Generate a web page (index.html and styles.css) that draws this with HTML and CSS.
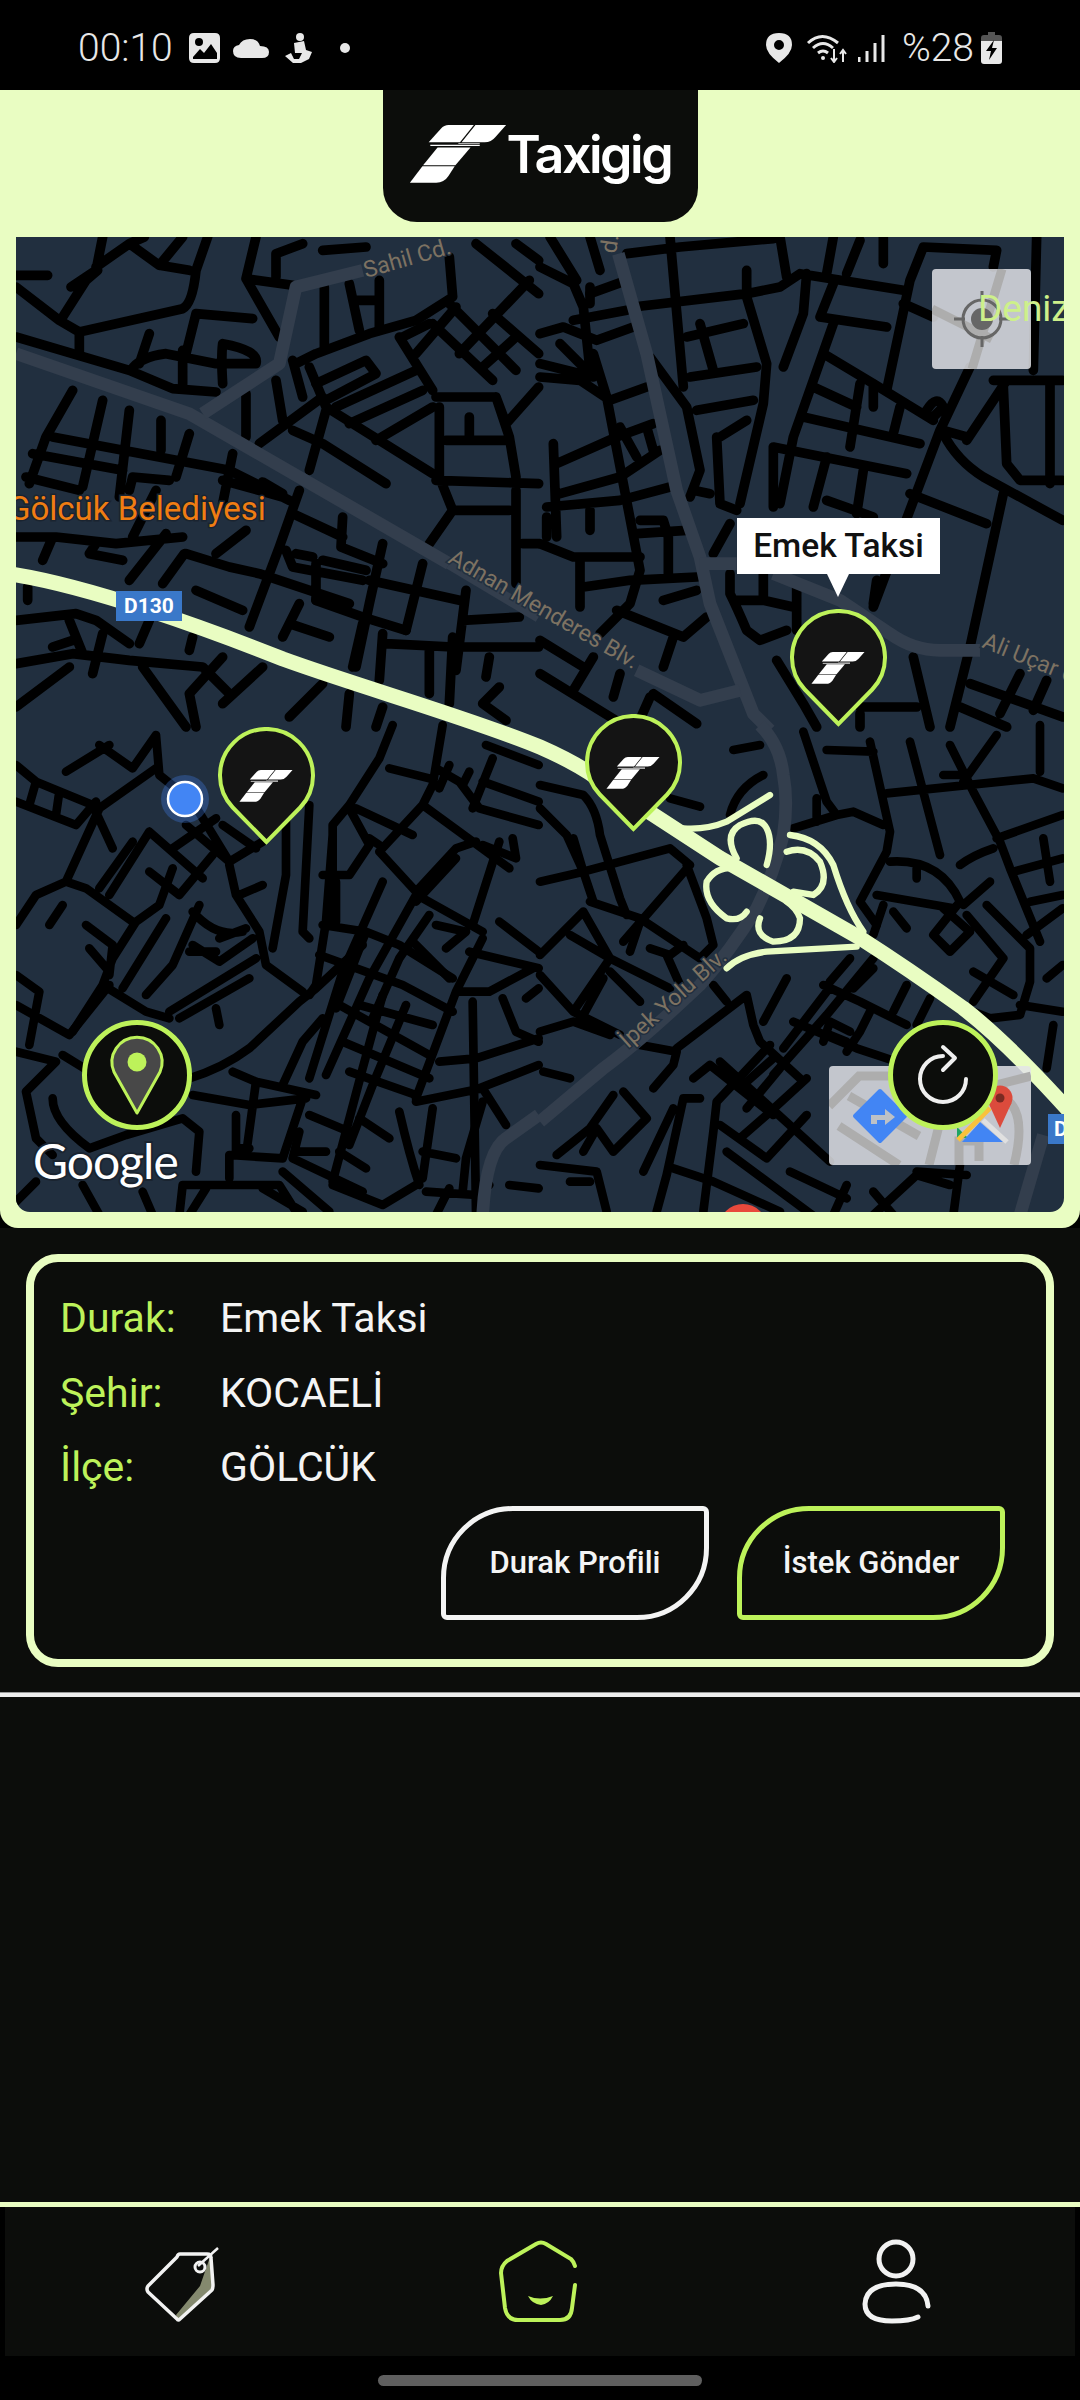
FILE: index.html
```html
<!DOCTYPE html>
<html lang="tr">
<head>
  <meta charset="UTF-8" />
  <meta name="viewport" content="width=device-width, initial-scale=1" />
  <title>Taxigig</title>
  <link rel="stylesheet" href="styles.css">
</head>
<body>
  <svg class="defs" aria-hidden="true">
    <symbol id="tlogo" viewBox="178 135 292 176">
      <path d="M235 187L272 146Q282 135 295 135H372L330 187Z"/>
      <path d="M335 187L377 135H470L437 172Q425 187 405 187Z"/>
      <path d="M240 195H390V199H240Z"/>
      <path d="M325 190H390V192H325Z"/>
      <path d="M262 203H362L316 257H218Z"/>
      <path d="M216 260H314L295 290Q282 310 258 310H178Z"/>
    </symbol>
  </svg>

  <div class="status">
    <div class="status-left">
      <span class="clock">00:10</span>
      <svg class="st-gallery" viewBox="0 0 31 30"><path d="M5 0H26Q31 0 31 5V25Q31 30 26 30H5Q0 30 0 25V5Q0 0 5 0Z" fill="#e8e8e8"/><circle cx="10" cy="9" r="4" fill="#000"/><path d="M4 24L11 16L15 20L22 11L28 20V26H4Z" fill="#000"/></svg>
      <svg class="st-cloud" viewBox="0 0 36 19"><path d="M8 19Q0 19 0 12Q0 7 6 6Q9 0 17 0Q25 0 27 7Q36 7 36 13Q36 19 29 19Z" fill="#e8e8e8"/></svg>
      <svg class="st-figure" viewBox="0 0 28 30"><circle cx="15" cy="4" r="4" fill="#e8e8e8"/><path d="M9 10L19 8L21 17L27 19L24 26L16 30H8L0 23L6 20L9 26H14L17 20H10Z" fill="#e8e8e8"/></svg>
      <span class="st-dot"></span>
    </div>
    <div class="status-right">
      <svg class="st-loc" viewBox="0 0 26 30"><path fill-rule="evenodd" d="M13 0Q26 0 26 12Q26 20 13 30Q0 20 0 12Q0 0 13 0ZM13 7A5 5 0 1 0 13 17A5 5 0 1 0 13 7Z" fill="#e8e8e8"/></svg>
      <svg class="st-wifi" viewBox="0 0 42 30"><g fill="none" stroke="#e8e8e8" stroke-width="3"><path d="M2 10Q16 -3 32 10"/><path d="M7 15Q17 6 27 15"/><path d="M12 20Q17 16 22 20"/></g><circle cx="17" cy="25" r="2" fill="#e8e8e8"/><path d="M28 16V28M25 25L28 29L31 25M37 29V18M34 21L37 17L40 21" fill="none" stroke="#e8e8e8" stroke-width="2"/></svg>
      <svg class="st-signal" viewBox="0 0 28 30"><path d="M1 24V29M9 18V29M17 10V29M25 2V29" fill="none" stroke="#e8e8e8" stroke-width="3"/></svg>
      <span class="clock">%28</span>
      <svg class="st-batt" viewBox="0 0 21 32"><path d="M7 0H14V3H18Q21 3 21 6V9H0V6Q0 3 3 3H7Z" fill="#555"/><path d="M0 9H21V29Q21 32 18 32H3Q0 32 0 29Z" fill="#e8e8e8"/><path d="M13 8L5 19H10L8 28L16 16H11Z" fill="#000"/></svg>
    </div>
  </div>

  <div class="top">
    <div class="brand">
      <svg class="brand-mark"><use href="#tlogo"/></svg>
      <span class="brand-name">Taxigig</span>
    </div>

    <div class="map">
      <svg class="roads" viewBox="16 237 1048 975">
        <g transform="translate(16 237) scale(.33333)" class="rd rd-a">
          <path d="M0 150L130 250L190 285L500 215Q530 200 540 100L575 0M190 285L190 350M140 240L210 130L245 100M165 150L240 100L260 0M240 90L340 20L430 85L520 100M340 20L385 0M430 85L500 0M0 115H95"/>
          <path d="M0 300L340 400L470 455L600 465M345 400Q370 360 450 350L600 380H720Q730 340 620 320Q615 360 620 440M400 290L370 380M500 340V450M510 350L540 230L710 245"/>
          <path d="M690 125L790 300M720 0L690 125L830 145M780 120V50L860 20M920 40L1050 30M925 150V330M1000 140L1030 280M1090 130V280M1020 190H1090"/>
          <path d="M1300 60L1310 180L1200 250L1060 290L900 350L840 380M830 370L860 480M780 430L800 550M690 470V600M880 390L930 510L1250 710M730 620L920 480M830 580L920 620L1110 740M930 520L880 700"/>
          <path d="M900 440L1050 370L1080 410L930 490M960 510L1200 400M1000 560L1220 460M1080 610L1250 510M1150 300L1250 460M1160 300L1240 260M1250 260L1430 430M1300 200L1500 400M1330 350L1540 130M1430 230L1568 350M1200 350L1320 210M1400 390L1500 300M1380 20L1568 170M1500 20L1568 70"/>
          <path d="M1260 480L1440 480L1480 600L1500 720M1270 510V720L1310 820L1240 920M1290 610H1480M1260 730L1568 740M1360 540V600M1310 820H1480M1500 760V1040M1520 920H1568M1440 480L1470 560L1568 450"/>
          <path d="M170 460L90 600L40 740M260 490L200 750M340 520L310 780M435 550V640M520 590L480 720M650 650L620 800M110 600L640 700L820 790M50 650L320 700M30 720L190 760M340 760L350 720L460 730M620 730L800 780M740 735L800 770"/>
          <path d="M850 760L790 930L700 1170M830 830L980 900M980 840L975 930L1100 980M600 950L690 880M510 950L640 990L730 1010L1000 1100M810 940L830 990L1040 1030M840 950L890 960M920 970L1050 1000M900 980V1090M1100 920L1060 1100L1020 1290M1220 980L1170 1180M1060 1030L1330 1090M1350 1060L1320 1300M1340 1150L1510 1140"/>
          <path d="M540 1060L680 1120M850 1100L800 1200M820 1160L940 1200M900 1090L1040 1140L1170 1180M0 900L120 900L300 920L500 900M450 890L340 1030M505 950L440 1040M110 900L80 970M240 920L220 950L320 970M420 760L350 900"/>
          <path d="M0 1150L180 1130L240 1150L340 1220M0 1280L170 1250L340 1270L560 1290L640 1370M160 1150L200 1250M260 1190L230 1310M110 1230L170 1210M0 1410L160 1290M370 1220L400 1150M530 1200L520 1240M35 1050V1090"/>
          <path d="M380 1290L510 1470M620 1260L520 1370L540 1470M740 1290L620 1400M920 1340L820 1440M1040 1160L1010 1290M1100 1190L1090 1330M1240 1230V1370M1310 1200L1300 1400M1110 1220L1310 1230L1568 1230M1420 1260L1410 1320M1450 1350L1400 1400L1470 1450M1000 1370L990 1470M1100 1410L1080 1470"/>
        </g>
        <g transform="translate(540 237) scale(.33333)" class="rd rd-a">
          <path d="M150 170L260 130M100 250L260 220M280 210L620 170L720 150L780 110L1090 160M260 50L420 30L700 5M390 0L430 450M720 0L740 120M620 100V180L680 380L670 500L600 800M800 110L790 230L730 390M880 0L860 110M1030 0V80M1150 30L1370 40L1360 90M1150 30L1110 130L1040 460M960 10L920 110"/>
          <path d="M880 140L840 240L1040 270M880 260L760 600L720 800M850 350L1000 440L1180 550M1090 200L1180 240M1000 440V510M820 450L950 510M790 540L1140 620M960 440L930 630M1080 510L1060 590M700 630L1100 710M700 630V810M860 660L820 810M970 700L950 830M860 790L1000 840M1110 770L1340 860"/>
          <path d="M1290 390L1200 580L1000 1110M1160 520Q1190 470 1210 510L1180 540M1210 580L1280 600M1400 430L1280 610M1360 430H1568M1390 450L1400 680L1440 730H1568M1530 440V740M1210 590Q1250 670 1330 720L1568 850M1390 770L1290 1230L1230 1470M1490 0L1480 400"/>
          <path d="M0 90L100 140L130 210L150 400M150 150V200M30 0L110 130M150 0L180 100M0 290L70 270L170 310L280 270M60 320L160 420L0 380M0 420L120 430L210 490L320 450M160 350L200 480L300 1000L270 1100L180 1190M480 260L520 400M440 300L610 260M450 420L650 390M470 520L640 490M330 360L440 510L480 700L450 780M530 600L540 800L590 820M540 600L620 550"/>
          <path d="M40 620L50 900M50 680L230 600L340 560M240 570L290 660M320 570L340 640M60 770L240 720L360 640M20 810L240 790L390 750M20 840V900M150 820V880M0 920L100 960H300M300 850H370L385 900M290 890L440 880M385 900V1010M120 960V1110M130 1050L270 1030L470 1020M370 1090L470 1060M230 1120L430 1200L500 1140M400 1200L370 1290M160 1260L100 1360M240 1310L220 1380M0 1210L130 1290M0 1310L260 1470M330 1380L290 1470M340 1370L470 1460M520 950L570 860M460 760L510 770"/>
          <path d="M570 1010V1070Q590 1110 620 1180L660 1210L740 1180M580 1090H670L760 1110M670 1000V1090M770 1040V1180M710 1270L790 1400L830 1470M1000 1100L1010 1030M1120 1260L1170 1470M960 1410H1130M1290 1340L1568 1440M1260 1410L1400 1470M1440 1310L1380 1430M1520 1330L1480 1420M960 1430V1470"/>
        </g>
        <g transform="translate(16 725) scale(.33333)" class="rd rd-b">
          <path d="M0 120L60 170L230 240L290 370M60 170L40 240M130 200L120 270M0 230L180 300L240 230M250 60L350 130L420 30M420 30L430 150L530 230L640 410M150 140L280 60M420 130L250 250L150 470L60 510L0 600M150 470L210 490L350 590M350 350L250 490M400 320L280 510M400 320L560 460M470 370L600 280M400 440L490 510L590 390M510 300L640 410L740 350M620 300L720 370"/>
          <path d="M640 420L660 510L730 620L750 720L860 800M670 510L740 480M550 540L470 720L390 810M450 580L320 790M470 430L430 540L360 590L290 700L260 780L170 920M530 660L610 710L710 640M520 680H600M210 600L290 660L280 750M220 670L280 740M100 600L140 540M530 560Q600 640 680 620M610 640L690 610M720 700L460 860M700 760L490 880M600 850L610 900M260 780L390 860L460 880"/>
          <path d="M0 750L70 800L40 960M0 840L160 930L280 780M0 980L120 1010L30 1100L60 1240L110 1290M110 1120Q110 1190 220 1270L330 1230L500 1180L550 1220L540 1340M140 990L270 1070M520 1060Q620 1030 700 970L850 830L900 790L1040 660M530 1110L700 1140L870 1120M650 1040L720 1070L900 1110M720 1070L690 1290M800 1080L860 950L920 880M860 1120L800 1300L640 1290V1360M660 1170V1290M660 1270H700"/>
          <path d="M950 330L930 590L900 780L880 810M810 270V450L770 670M880 240L860 620L880 640M1000 240L950 300V600M1060 360L1000 450L920 450M960 470V590M1000 250L1060 360M920 600L1050 620L960 850M910 690L1160 780L1310 860M1050 620L1150 660L1310 760M1130 0L1090 100L1000 240M1280 0L1250 180L1220 240L1480 430M1090 380L1200 500L1320 370L1380 350M1060 340L1090 360M1020 250L1190 330M1220 240L1090 380M1120 130L1240 160M1260 130L1330 170L1390 250L1568 300M1430 100L1370 250M1400 170L1568 230M1410 60L1568 120M1300 120L1270 190M1360 140L1340 180"/>
          <path d="M1100 470L980 740L880 1060M1200 510L1060 760L930 1050M1240 570L1150 700L1070 880M1220 520L1400 620M1320 400L1200 530M1450 350L1370 600M1400 360L1500 400L1490 340M1450 590L1568 680M1260 600L1350 620L1290 670M1190 650L1300 760M1400 640L1320 800L1200 1120M1360 680L1568 730M1320 800H1420L1550 730M1370 830L1380 1460M1460 820L1500 920L1568 950M1530 820L1568 790M1270 1010L1380 1000L1568 940M1390 1090L1568 1020M1200 1130L1400 1090L1470 1200"/>
          <path d="M1100 810L1040 1030L950 1370M1170 840L1070 1080L1000 1260M980 950L1240 1060M1030 840L1250 900M970 840L1240 990M1000 1040L1200 1110M880 1170L1000 1220M1030 1180L1120 1240M1150 1160Q1180 1290 1210 1380M1250 1150L1220 1360M1220 1280L1320 1300M1400 1130L1350 1300L1340 1400"/>
          <path d="M850 1280H930M830 1300L1040 1400M970 1280L1050 1330M850 1220L830 1300M800 1340L940 1460M740 1390L860 1460M950 1380L1100 1440L1200 1380M500 1380H790L840 1460M500 1380L490 1470M380 1400L410 1470M570 1390L520 1470M0 1430L60 1370M200 1380L250 1470M1230 1400L1380 1410L1420 1380M1480 1380L1568 1390M1300 1390L1260 1470"/>
        </g>
        <g transform="translate(540 725) scale(.33333)" class="rd rd-b">
          <path d="M0 180L130 210Q170 250 180 330L240 520L260 570M0 250L80 330L130 440L160 530M100 340L130 440L0 470M130 440L390 370L450 420L250 650M390 220L480 245M580 75L660 60M150 530L300 580L480 700L520 660M440 420L500 580L520 660M570 270Q590 190 670 150"/>
          <path d="M0 690L130 560L210 700L100 860L0 750M90 630L210 700L390 790M210 740L300 830M270 680L300 590M330 670L390 690L430 660M380 690L420 780M100 860L240 930M0 920L100 890L210 930M130 870L190 760M10 1040L90 1060M300 960L410 980L400 1020L340 1090M0 1320L170 1340L200 1460M90 1370H150"/>
          <path d="M410 970L620 810L640 900L660 950L780 1060M520 780L560 830M740 760L670 890M250 1100L320 1180L220 1280L170 1210L130 1280M220 1110L150 1210L50 1290M460 1060L510 1020L700 1170M540 1010L870 1310M400 1150L310 1340M480 1120H430L380 1350L350 1460M690 960L530 1130L520 1220L490 1460"/>
          <path d="M850 780L960 830L1100 900M860 800L730 970M1000 700L860 870L700 1050M930 700L870 770M1000 730L940 790M1100 780L1060 860M1170 820L1130 900M990 860L960 920L920 980M760 890L950 970L1100 1020M850 950L870 890L930 920M870 930L920 950M620 1070L700 1000M720 1030L620 1150M800 1060L680 1170L600 1240M540 1200L680 1300L800 1170M560 1280L830 1480M400 1330L520 1370L720 1460M750 1340L920 1420M920 1380L880 1470M1000 1470L1130 1350L1230 1380M1130 1340L1280 1350M1260 1320L1240 1470M1060 1470L1000 1400"/>
          <path d="M790 20L860 230L890 270M830 220V290M760 310L890 270L940 260L1030 300M860 75L1000 80M990 50L1050 320L1040 380L960 530L1010 600M1110 50L1200 390M1230 60L1300 200L1380 350L1410 430L1500 650M1210 150H1270M1370 30L1270 170M1040 205L1480 160L1568 190M1500 0V140M1370 340L1568 270M1260 420Q1300 390 1360 370M1510 340L1530 470M1420 440L1568 400M1470 530L1568 510"/>
          <path d="M1050 410Q1200 400 1260 530M1130 430V460M1010 510L1240 550M1060 560L1100 610M1000 630L1030 540M1260 530L1180 630L1230 680L1290 620L1210 550M1350 470L1270 540M1280 570L1390 700L1300 830M1340 540L1470 670V770L1440 870L1350 880L1300 860M1300 740L1420 810M1460 630L1568 550M1440 840L1568 860M1520 1030L1540 900M1520 760L1568 720"/>
        </g>

        <!-- ana yollar -->
        <g transform="translate(16 237) scale(.33333)" class="art">
          <path d="M0 350L520 530L1300 980"/>
          <path d="M1300 980L1568 1140" class="art-thin"/>
          <path d="M560 530L790 380L840 150L1040 100"/>
        </g>
        <g transform="translate(540 237) scale(.33333)" class="art">
          <path d="M235 50L320 350L410 760L480 960L510 1100L640 1430L690 1480"/>
          <path d="M480 980H590M700 1010L900 1090L1050 1190Q1120 1240 1200 1240H1320M290 1300L480 1390L600 1360"/>
        </g>
        <g transform="translate(16 725) scale(.33333)" class="art">
          <path d="M1400 1470Q1410 1280 1470 1240L1568 1170"/>
        </g>
        <g transform="translate(540 725) scale(.33333)" class="art">
          <path d="M660 0Q720 60 730 150Q745 230 730 330Q700 450 650 550Q570 680 480 780Q300 950 190 1030L0 1190"/>
          <path d="M1510 1230L1440 1470"/>
        </g>

        <!-- otoyol -->
        <path class="hwy-main" d="M10 574C90 586 210 630 283 659C360 687 470 718 540 747C565 758 580 766 597 778L720 858L860 938Q907 968 963 1008Q1007 1042 1070 1112"/>
        <g transform="translate(540 725) scale(.33333)" class="hwy">
          <path class="ramp" d="M430 310Q500 315 560 290L690 210M590 400Q550 330 600 300Q660 270 680 310Q700 350 680 420M600 430Q530 420 500 470Q490 530 560 580Q600 590 620 560M660 580Q640 630 700 650Q780 650 780 580Q770 550 740 530M740 380Q800 360 840 410Q870 480 820 510L760 500M750 330Q840 340 880 420Q920 550 970 620M560 730Q600 690 680 680L950 665"/>
        </g>

        <circle cx="743" cy="1228" r="24" fill="#e8493c"/>

        <text x="8" y="520" class="lbl-poi">Gölcük Belediyesi</text>
        <text class="lbl-road" transform="translate(366 278) rotate(-16)">Sahil Cd.</text>
        <text class="lbl-road" transform="translate(616 254) rotate(-82)">d.</text>
        <text class="lbl-road" transform="translate(447 562) rotate(30)">Adnan Menderes Blv.</text>
        <text class="lbl-road" transform="translate(981 647) rotate(22)">Ali Uçar Cd.</text>
        <text class="lbl-road" transform="translate(628 1049) rotate(-42)">İpek Yolu Blv.</text>

        <circle cx="185" cy="799" r="24" fill="#4285f4" fill-opacity=".3"/>
        <circle cx="185" cy="799" r="17" fill="#4285f4" stroke="#fff" stroke-width="2.500"/>
        <text x="33" y="1179" class="lbl-google">Google</text>
      </svg>

      <div class="shield shield-a">D130</div>
      <div class="shield shield-b">D</div>

      <div class="tool tool-locate">
        <svg viewBox="0 0 99 100">
          <path d="M0 40L60 70M70 0L40 100" fill="none" stroke="#adadad" stroke-width="9"/>
          <circle cx="50" cy="50" r="19" fill="none" stroke="#666" stroke-width="3"/>
          <circle cx="50" cy="50" r="11" fill="#666"/>
          <path d="M50 22V33M50 67V78M22 50H33M67 50H78" stroke="#666" stroke-width="3"/>
        </svg>
      </div>
      <div class="lbl-deniz">Deniz</div>

      <div class="tool tool-nav">
        <svg viewBox="0 0 202 99">
          <g fill="none" stroke="#adadad" stroke-width="9">
            <path d="M0 40L30 10H60M10 60L70 99M20 30L90 70M115 40L100 99M130 99V75H150V95M170 30Q200 40 185 99M155 22L202 10"/>
          </g>
          <path d="M51 25L76 50L51 75L26 50Z" fill="#4285f4" stroke="#4285f4" stroke-width="4" stroke-linejoin="round"/>
          <path d="M42 58V49H56V43L66 51L56 59V54H48V58Z" fill="#bdc1c6"/>
          <path d="M128 61V72H139Z" fill="#1fa463"/>
          <path d="M133 76L151 56L174 76Z" fill="#4285f4"/>
          <path d="M129 74L161 42" stroke="#f9c23c" stroke-width="5"/>
          <path d="M154 54L178 76" stroke="#e0e0e0" stroke-width="5"/>
          <circle cx="171" cy="32" r="12.500" fill="#dc4b3c"/>
          <path d="M159.500 37L171 62L182.500 37Z" fill="#dc4b3c"/>
          <circle cx="171" cy="32" r="4.500" fill="#7a2a22"/>
        </svg>
      </div>

      <div class="callout">Emek Taksi</div>

      <svg class="pin pin-a" viewBox="0 0 97 118"><path d="M48.500 115L14.800 80.500A46.500 46.500 0 1 1 82.200 80.500Z"/><use href="#tlogo" x="21" y="43" width="54" height="32"/></svg>
      <svg class="pin pin-b" viewBox="0 0 97 118"><path d="M48.500 115L14.800 80.500A46.500 46.500 0 1 1 82.200 80.500Z"/><use href="#tlogo" x="21" y="43" width="54" height="32"/></svg>
      <svg class="pin pin-c" viewBox="0 0 97 118"><path d="M48.500 115L14.800 80.500A46.500 46.500 0 1 1 82.200 80.500Z"/><use href="#tlogo" x="21" y="43" width="54" height="32"/></svg>

      <div class="round round-pin">
        <svg viewBox="0 0 100 100">
          <path d="M50 88L27 47A25 25 0 1 1 73 47Z" fill="#484848" stroke="#bdf25a" stroke-width="3" stroke-linejoin="round"/>
          <circle cx="50" cy="37" r="9.500" fill="#bdf25a"/>
        </svg>
      </div>
      <div class="round round-refresh">
        <svg viewBox="0 0 100 100">
          <path d="M73 54A23 23 0 1 1 50 31M50 22L62 33L50 45" fill="none" stroke="#efefef" stroke-width="4" stroke-linecap="round" stroke-linejoin="round"/>
        </svg>
      </div>
    </div>
  </div>

  <div class="main">
    <div class="card">
      <div class="row"><span class="key">Durak:</span><span>Emek Taksi</span></div>
      <div class="row"><span class="key">Şehir:</span><span>KOCAELİ</span></div>
      <div class="row"><span class="key">İlçe:</span><span>GÖLCÜK</span></div>
      <div class="actions">
        <button class="btn">Durak Profili</button>
        <button class="btn btn-green">İstek Gönder</button>
      </div>
    </div>
    <div class="divider"></div>
  </div>

  <div class="nav">
    <div class="nav-line"></div>
    <div class="nav-bar">
      <svg class="nav-icon" viewBox="140 2240 85 90">
        <path d="M210 2257L213 2287L178 2320L176 2315L200 2286Z" fill="#84896e"/>
        <path d="M180 2254H207Q211 2254 211 2258L213 2285Q213 2288 212 2290L180 2319Q178 2321 177 2319L148 2292Q146 2289 148 2286L177 2257Q178 2254 180 2254Z" fill="none" stroke="#f2f2f2" stroke-width="3.500" stroke-linejoin="round"/>
        <circle cx="200" cy="2267" r="5" fill="none" stroke="#f2f2f2" stroke-width="3"/>
        <path d="M198 2266L218 2248" stroke="#f2f2f2" stroke-width="2.500"/>
      </svg>
      <svg class="nav-icon" viewBox="495 2236 88 90">
        <path d="M575 2266Q574 2262 571 2259L546 2244Q541 2241 536 2244L507 2261Q501 2266 501 2273L505 2308Q507 2320 518 2320H560Q571 2320 572 2308L575 2285" fill="none" stroke="#bdf25a" stroke-width="4" stroke-linecap="round"/>
        <path d="M528 2296Q540 2301 553 2296Q549 2304 541 2305Q532 2304 528 2296Z" fill="#bdf25a"/>
      </svg>
      <svg class="nav-icon" viewBox="853 2236 88 92">
        <circle cx="896" cy="2259" r="17" fill="none" stroke="#f2f2f2" stroke-width="5"/>
        <path d="M928 2306Q926 2284 896 2284Q866 2284 865 2304Q865 2321 892 2321Q910 2321 918 2317" fill="none" stroke="#f2f2f2" stroke-width="5" stroke-linecap="round"/>
      </svg>
    </div>
    <div class="home-area"><span class="home-bar"></span></div>
  </div>
</body>
</html>
```

FILE: styles.css
```css
* {
  box-sizing: border-box;
}
body {
  margin: 0;
  width: 1080px;
  height: 2400px;
  display: flex;
  flex-direction: column;
  background: #000;
  font-family: Roboto, "Noto Sans", sans-serif;
  color: #f4f4f4;
  overflow: hidden;
}
.defs {
  position: absolute;
  width: 0;
  height: 0;
}
#tlogo {
  fill: #fff;
}

/* status bar */
.status {
  height: 90px;
  flex: none;
  background: #000;
  display: flex;
  justify-content: space-between;
  align-items: center;
  padding: 6px 78px 0 78px;
}
.status-left, .status-right {
  display: flex;
  align-items: center;
}
.clock {
  font-size: 39px;
  font-weight: 300;
  line-height: 44px;
  color: #e8e8e8;
}
.st-gallery {
  width: 31px;
  height: 30px;
  margin-left: 16px;
}
.st-cloud {
  width: 36px;
  height: 19px;
  margin-left: 13px;
}
.st-figure {
  width: 28px;
  height: 30px;
  margin-left: 16px;
}
.st-dot {
  width: 10px;
  height: 10px;
  margin-left: 27px;
  border-radius: 50%;
  background: #e8e8e8;
}
.st-loc {
  width: 26px;
  height: 30px;
}
.st-wifi {
  width: 42px;
  height: 30px;
  margin-left: 14px;
}
.st-signal {
  width: 28px;
  height: 30px;
  margin-left: 10px;
}
.status-right .clock {
  margin-left: 16px;
}
.st-batt {
  width: 21px;
  height: 32px;
  margin-left: 7px;
}

/* header + map */
.top {
  flex: none;
  height: 1138px;
  background: #e9fdc2;
  border-radius: 0 0 18px 18px;
  display: flex;
  flex-direction: column;
  align-items: center;
}
.brand {
  width: 315px;
  height: 132px;
  flex: none;
  background: #0c0d0b;
  border-radius: 0 0 34px 34px;
  display: flex;
  align-items: flex-start;
  padding: 35px 0 0 26px;
}
.brand-mark {
  width: 98px;
  height: 58px;
}
.brand-name {
  font-family: Inter, sans-serif;
  font-size: 52px;
  font-weight: 600;
  line-height: 60px;
  letter-spacing: -2.500px;
  color: #fff;
}
.map {
  position: relative;
  width: 1048px;
  height: 975px;
  margin-top: 15px;
  background: #212f3f;
  border-radius: 0 0 14px 14px;
  overflow: hidden;
}
.roads {
  display: block;
  width: 1048px;
  height: 975px;
}
.rd path {
  fill: none;
  stroke: #000;
  stroke-linecap: round;
  stroke-linejoin: round;
}
.rd-a path {
  stroke-width: 29px;
}
.rd-b path {
  stroke-width: 26px;
}
.art path {
  fill: none;
  stroke: #333e4d;
  stroke-width: 38px;
  stroke-linejoin: round;
}
.art .art-thin {
  stroke-width: 34px;
}
.hwy-main {
  fill: none;
  stroke: #e9fdc2;
  stroke-width: 15px;
}
.hwy path {
  fill: none;
  stroke: #e9fdc2;
}
.hwy .ramp {
  stroke-width: 19px;
  stroke-linecap: round;
}
.lbl-poi {
  font-size: 33px;
  fill: #f07d12;
  stroke: #1a2430;
  stroke-width: 3px;
  paint-order: stroke;
}
.lbl-deniz {
  position: absolute;
  left: 962px;
  top: 50px;
  font-size: 37px;
  line-height: 44px;
  color: #cdf08a;
  white-space: nowrap;
}
.lbl-road {
  font-size: 23px;
  fill: #7d7262;
  stroke: #212f3f;
  stroke-width: 3px;
  paint-order: stroke;
}
.lbl-google {
  font-family: Lato, sans-serif;
  font-size: 48px;
  letter-spacing: -1px;
  fill: #fff;
  stroke: #1a2430;
  stroke-width: 4px;
  paint-order: stroke;
}
.shield {
  position: absolute;
  height: 30px;
  background: #3a78c9;
  color: #fff;
  font-size: 21px;
  font-weight: 700;
  line-height: 30px;
  text-align: center;
}
.shield-a {
  left: 100px;
  top: 354px;
  width: 66px;
}
.shield-b {
  left: 1032px;
  top: 877px;
  width: 66px;
  text-align: left;
  padding-left: 6px;
}
.tool {
  position: absolute;
  background: rgba(226, 228, 232, .84);
  border-radius: 4px;
  overflow: hidden;
}
.tool svg {
  display: block;
  width: 100%;
  height: 100%;
}
.tool-locate {
  left: 916px;
  top: 32px;
  width: 99px;
  height: 100px;
}
.tool-nav {
  left: 813px;
  top: 829px;
  width: 202px;
  height: 99px;
}
.callout {
  position: absolute;
  left: 721px;
  top: 281px;
  width: 203px;
  height: 56px;
  background: #fff;
  color: #111;
  font-size: 33.500px;
  font-weight: 500;
  line-height: 56px;
  text-align: center;
}
.callout::after {
  content: "";
  position: absolute;
  left: 90px;
  top: 56px;
  border-left: 11px solid transparent;
  border-right: 11px solid transparent;
  border-top: 23px solid #fff;
}
.pin {
  position: absolute;
  width: 97px;
  height: 118px;
}
.pin path {
  fill: #141414;
  stroke: #bdf25a;
  stroke-width: 4px;
}
.pin-a {
  left: 202px;
  top: 490px;
}
.pin-b {
  left: 569px;
  top: 477px;
}
.pin-c {
  left: 774px;
  top: 372px;
}
.round {
  position: absolute;
  width: 110px;
  height: 110px;
  top: 783px;
  background: #0c0d0b;
  border: 5px solid #bdf25a;
  border-radius: 50%;
}
.round svg {
  display: block;
  width: 100px;
  height: 100px;
}
.round-pin {
  left: 66px;
}
.round-refresh {
  left: 872px;
}

/* station card */
.main {
  flex: 1;
  background: #0c0d0b;
  padding-top: 26px;
}
.card {
  height: 413px;
  margin: 0 26px;
  border: 8px solid #e9fdc2;
  border-radius: 32px;
  padding: 19px 41px 0 26px;
}
.row {
  display: grid;
  grid-template-columns: 160px 1fr;
  font-size: 41px;
  line-height: 74.500px;
  color: #f4f4f4;
}
.key {
  color: #bdf25a;
}
.actions {
  display: flex;
  justify-content: flex-end;
  gap: 28px;
  margin-top: 1px;
}
.btn {
  width: 268px;
  height: 114px;
  background: #0c0d0b;
  border: 5px solid #f4f4f4;
  border-radius: 72px 6px 72px 6px;
  color: #f4f4f4;
  font-family: Roboto, sans-serif;
  font-size: 31px;
  font-weight: 500;
}
.btn-green {
  border-color: #bdf25a;
}
.divider {
  height: 5px;
  margin-top: 25px;
  background: #eee;
  border-top: 1px solid #999;
}

/* bottom nav */
.nav {
  flex: none;
  height: 198px;
  background: #000;
  display: flex;
  flex-direction: column;
}
.nav-line {
  height: 5px;
  background: #e9fdc2;
}
.nav-bar {
  height: 149px;
  margin: 0 5px;
  background: #0c0d0b;
  display: flex;
}
.nav-icon {
  flex: none;
}
.nav-bar .nav-icon:nth-child(1) {
  width: 85px;
  height: 90px;
  margin: 33px 0 0 135px;
}
.nav-bar .nav-icon:nth-child(2) {
  width: 88px;
  height: 90px;
  margin: 29px 0 0 270px;
}
.nav-bar .nav-icon:nth-child(3) {
  width: 88px;
  height: 92px;
  margin: 29px 0 0 270px;
}
.home-area {
  flex: 1;
  display: flex;
  justify-content: center;
  padding-top: 19px;
}
.home-bar {
  width: 324px;
  height: 11px;
  border-radius: 6px;
  background: #5f5f5f;
}
```
